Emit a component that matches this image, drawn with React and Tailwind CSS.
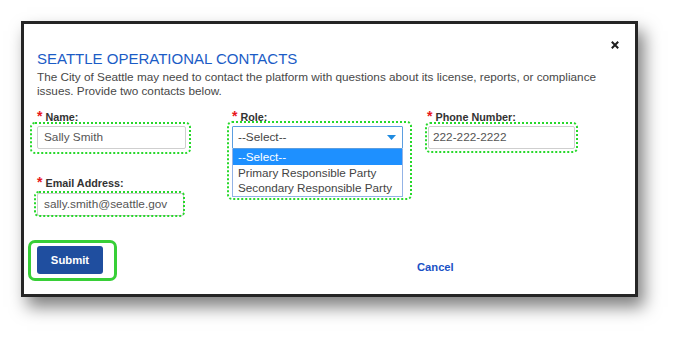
import React from "react";

function Label({ children }) {
  return (
    <div className="h-[13px] text-[10.8px] leading-[13px] font-bold text-[#333] whitespace-nowrap">
      <span className="text-[14px] leading-[0] text-[#e8161b]">*</span> {children}
    </div>
  );
}

function Dotted({ className }) {
  return (
    <span
      className={
        "pointer-events-none absolute border-2 border-dotted border-[#27d82b] rounded-[5px] " +
        className
      }
    />
  );
}

export default function App() {
  return (
    <div className="min-h-screen bg-white pt-[21px] pl-[21px] font-['Liberation_Sans',Arial,sans-serif]">
      <div className="w-[617px] h-[276px] border-[3px] border-[#252525] bg-white shadow-[6px_10px_16px_rgba(0,0,0,0.5)] pl-[13px] pr-[13px] pt-[17px]">
        {/* header */}
        <div className="flex justify-between items-start">
          <div className="mt-[9px] text-[15px] leading-[17px] text-[#1b5cc6] whitespace-nowrap">
            SEATTLE OPERATIONAL CONTACTS
          </div>
          <button className="mr-[3px] w-[8px] h-[8px] flex items-center justify-center">
            <svg width="8" height="8" viewBox="0 0 8 8">
              <path d="M0.8 0.8 L7.2 7.2 M7.2 0.8 L0.8 7.2" stroke="#1e1e1e" strokeWidth="2" strokeLinecap="butt" />
            </svg>
          </button>
        </div>
        <p className="mt-[3px] w-[585px] text-[11.75px] leading-[14px] text-[#484848]">
          The City of Seattle may need to contact the platform with questions about its license, reports, or compliance issues. Provide two contacts below.
        </p>

        {/* fields */}
        <div className="mt-[13px] grid grid-cols-[195px_195px_195px] gap-y-[28px]">
          {/* Name */}
          <div>
            <Label>Name:</Label>
            <div className="relative mt-[2px] w-[149px]">
              <div className="h-[23px] border border-[#cfcfcf] rounded-[2px] px-[6px] flex items-center text-[11.8px] text-[#555]">
                Sally Smith
              </div>
              <Dotted className="-left-[7px] -right-[5px] -top-[4px] -bottom-[5px]" />
            </div>
          </div>

          {/* Role */}
          <div>
            <Label>Role:</Label>
            <div className="relative mt-[2px] w-[171px]">
              <div className="h-[23px] border border-[#5b9ee0] rounded-[1px] pl-[5px] pr-[6px] flex items-center justify-between text-[11.8px] text-[#444] bg-white">
                <span>--Select--</span>
                <svg width="9" height="5" viewBox="0 0 9 5">
                  <path d="M0 0 H9 L4.5 5 Z" fill="#1f8be0" />
                </svg>
              </div>
              <div className="absolute left-0 top-full w-[171px] border border-[#93b3e6] border-t-0 bg-white text-[11.7px] leading-[15.5px] text-[#444]">
                <div className="bg-[#1e90ff] text-white pl-[5px]">--Select--</div>
                <div className="pl-[5px]">Primary Responsible Party</div>
                <div className="pl-[5px]">Secondary Responsible Party</div>
              </div>
              <Dotted className="-left-[5px] -right-[9px] -top-[5px] -bottom-[51px]" />
            </div>
          </div>

          {/* Phone */}
          <div>
            <Label>Phone Number:</Label>
            <div className="relative mt-[2px] ml-[1px] w-[147px]">
              <div className="h-[23px] border border-[#cfcfcf] rounded-[2px] px-[4px] flex items-center text-[11.8px] text-[#555]">
                222-222-2222
              </div>
              <Dotted className="-left-[3px] -right-[3px] -top-[4px] -bottom-[4px]" />
            </div>
          </div>

          {/* Email */}
          <div>
            <Label>Email Address:</Label>
            <div className="relative mt-[3px] w-[147px]">
              <div className="h-[23px] border border-[#cfcfcf] rounded-[2px] px-[6px] flex items-center text-[11.8px] text-[#555]">
                sally.smith@seattle.gov
              </div>
              <Dotted className="-left-[3px] -right-[1px] -top-[2px] -bottom-[1px]" />
            </div>
          </div>
        </div>

        {/* actions */}
        <div className="mt-[24px] flex items-start">
          <div className="-ml-[9px] border-[3px] border-[#37cf37] rounded-[7px] pt-[3px] pb-[4px] pl-[6px] pr-[11px]">
            <button className="w-[66px] h-[28px] bg-[#1f4e9f] rounded-[3px] text-white font-bold text-[11.3px] flex items-center justify-center">
              Submit
            </button>
          </div>
          <a className="ml-[300px] mt-[21px] text-[11.2px] leading-[13px] font-bold text-[#1a52c6]">
            Cancel
          </a>
        </div>
      </div>
    </div>
  );
}
